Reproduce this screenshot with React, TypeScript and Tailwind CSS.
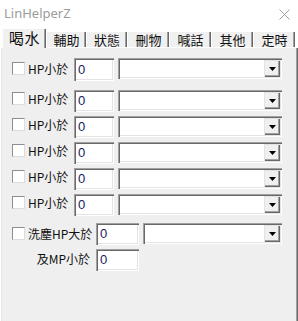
import React from "react";

const sunken =
  "shadow-[inset_1px_1px_0_#a0a0a0,inset_2px_2px_0_#696969,inset_-1px_-1px_0_#ffffff,inset_-2px_-2px_0_#e3e3e3]";

function Check({ mt }: { mt: string }) {
  return (
    <div
      className={`w-[13px] h-[13px] shrink-0 bg-white border border-t-[#8e8e8e] border-l-[#8e8e8e] border-r-[#dcdcdc] border-b-[#dcdcdc] ${mt}`}
    />
  );
}

function Edit({ w, h }: { w: string; h: string }) {
  return (
    <div className={`${w} ${h} shrink-0 bg-white ${sunken} flex items-center pl-[4px] pb-[1px]`}>
      <span className="text-[13px] leading-none text-[#1a1a5e] font-['Liberation_Sans',sans-serif]">0</span>
    </div>
  );
}

function Combo({ w }: { w: string }) {
  return (
    <div className={`${w} h-[21px] shrink-0 bg-white ${sunken} flex justify-end items-start pt-[2px] pr-[2px]`}>
      <div className="w-[16px] h-[17px] bg-[#f0f0f0] shadow-[inset_1px_1px_0_#e3e3e3,inset_-1px_-1px_0_#696969,inset_-2px_-2px_0_#a0a0a0] flex items-center justify-center">
        <svg width="7" height="4" viewBox="0 0 7 4">
          <polygon points="0,0 7,0 3.5,4" fill="#000" />
        </svg>
      </div>
    </div>
  );
}

function HpRow({ mt, first }: { mt: string; first?: boolean }) {
  return (
    <div className={`flex items-start ${mt}`}>
      <Check mt={first ? "mt-[4px]" : "mt-[2px]"} />
      <div className={`ml-[3px] w-[46px] whitespace-nowrap text-[12px] leading-[17px] ${first ? "mt-[2px]" : "mt-[0px]"}`}>
        HP小於
      </div>
      <Edit w="w-[40px]" h={first ? "h-[23px]" : "h-[22px]"} />
      <div className="ml-[4px]">
        <Combo w="w-[164px]" />
      </div>
    </div>
  );
}

const tabs = ["輔助", "狀態", "刪物", "喊話", "其他", "定時"];
const tabW = ["w-[40px]", "w-[41px]", "w-[42px]", "w-[42px]", "w-[42px]", "w-[42px]"];

export default function App() {
  return (
    <div className="w-[298px] h-[321px] bg-white overflow-hidden flex flex-col font-['Noto_Sans_CJK_TC','Noto_Sans',sans-serif] text-[#111]">
      {/* title bar */}
      <div className="h-[28px] shrink-0 flex items-center justify-between pl-[4px] pr-[8px]">
        <span className="text-[13px] text-[#9b9b9b] font-['Noto_Sans','Open_Sans',sans-serif] pb-[1px]">LinHelperZ</span>
        <svg width="11" height="11" viewBox="0 0 11 11">
          <path d="M0.5 0.5 L10.5 10.5 M10.5 0.5 L0.5 10.5" stroke="#a0a0a0" strokeWidth="1" />
        </svg>
      </div>
      {/* tab strip */}
      <div className="h-[19px] shrink-0 flex items-end pl-[2px] relative z-10">
        <div className="w-[44px] h-[20px] -mb-[1px] bg-[#f0f0f0] border-l border-t border-l-white border-t-white shadow-[inset_-1px_0_0_#696969,inset_-2px_0_0_#a0a0a0] flex justify-center items-start">
          <span className="text-[15px] leading-[17px] tracking-[0.5px]">喝水</span>
        </div>
        {tabs.map((t, i) => (
          <div
            key={t}
            className={`${tabW[i]} h-[16px] bg-[#f0f0f0] border-l border-t border-l-white border-t-white shadow-[inset_-1px_0_0_#696969,inset_-2px_0_0_#a0a0a0] flex justify-center items-start`}
          >
            <span className="text-[13px] leading-[15px]">{t}</span>
          </div>
        ))}
      </div>
      {/* panel */}
      <div className="flex-1 ml-[1px] w-[297px] bg-[#efefef] border-t border-l border-t-white border-l-[#e8e8e8] shadow-[inset_-1px_0_0_#696969,inset_-2px_0_0_#a0a0a0] pl-[10px] flex flex-col">
        <HpRow mt="mt-[10px]" first />
        <HpRow mt="mt-[9px]" />
        <HpRow mt="mt-[4px]" />
        <HpRow mt="mt-[4px]" />
        <HpRow mt="mt-[4px]" />
        <HpRow mt="mt-[4px]" />
        <div className="flex items-start mt-[7px]">
          <Check mt="mt-[4px]" />
          <div className="ml-[3px] w-[68px] whitespace-nowrap text-[12px] leading-[17px] mt-[2px]">洗塵HP大於</div>
          <Edit w="w-[43px]" h="h-[22px]" />
          <div className="ml-[4px]">
            <Combo w="w-[139px]" />
          </div>
        </div>
        <div className="flex items-start mt-[4px]">
          <div className="w-[84px] whitespace-nowrap text-right pr-[6px] text-[12px] leading-[17px] mt-[1px]">及MP小於</div>
          <Edit w="w-[43px]" h="h-[22px]" />
        </div>
      </div>
    </div>
  );
}
